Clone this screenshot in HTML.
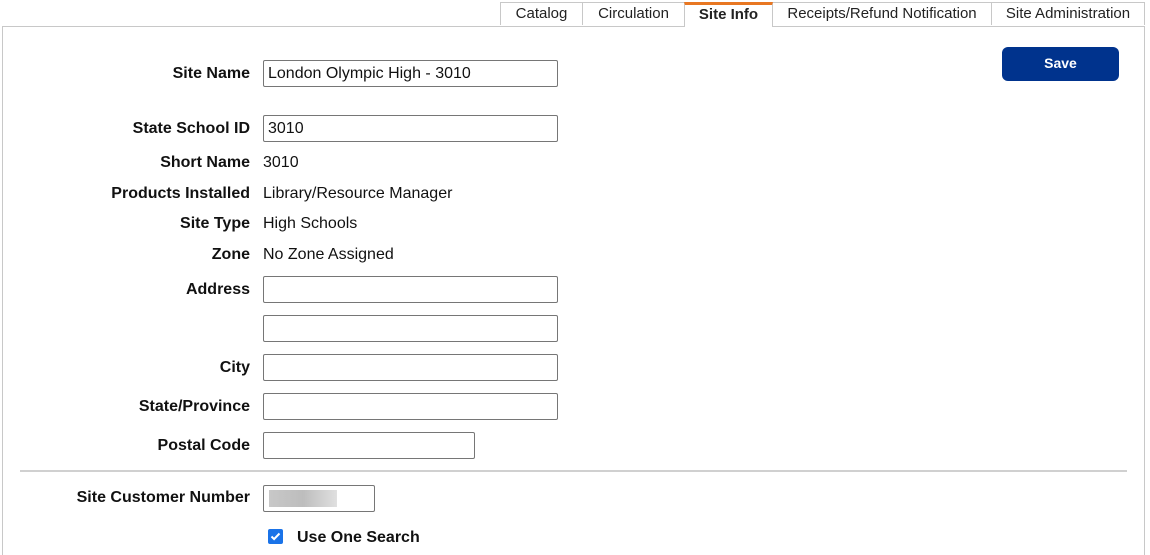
<!DOCTYPE html>
<html><head><style>
html,body{margin:0;width:1150px;height:555px;overflow:hidden}
body{background:#fff;font-family:"Liberation Sans",Arial,sans-serif;font-size:16px;color:#111;position:relative}
.a{position:absolute}
.tab{position:absolute;top:2px;height:23px;border:1px solid #c8c8c8;border-bottom:none;background:#fff;font-size:15px;line-height:22px;text-align:center;color:#222;box-sizing:border-box}
.panel{position:absolute;left:2px;top:26px;width:1143px;height:540px;border:1px solid #c8c8c8;border-bottom:none;box-sizing:border-box}
.lbl{position:absolute;right:900px;font-weight:bold;white-space:nowrap;transform:translateY(-50%);margin-top:1px}
.val{position:absolute;left:263px;white-space:nowrap;transform:translateY(-50%);margin-top:1px}
.in{position:absolute;left:263px;width:295px;height:27px;border:1px solid #767676;border-radius:2px;box-sizing:border-box;padding:0 4px;line-height:25px;font-size:16px}
</style></head><body>
<div class="panel"></div>
<div class="tab" style="left:500px;width:83px">Catalog</div>
<div class="tab" style="left:582px;width:103px">Circulation</div>
<div class="tab" style="left:684px;width:89px;font-weight:bold;border-top:3px solid #e87722;line-height:20px;height:25px;z-index:2">Site Info</div>
<div class="tab" style="left:772px;width:220px">Receipts/Refund Notification</div>
<div class="tab" style="left:991px;width:154px">Site Administration</div>
<div class="a" style="left:1002px;top:47px;width:117px;height:34px;background:#00338d;border-radius:6px;color:#fff;font-weight:bold;font-size:14px;line-height:33px;text-align:center">Save</div>

<div class="lbl" style="top:73px">Site Name</div><div class="in" style="top:60px">London Olympic High - 3010</div>
<div class="lbl" style="top:128px">State School ID</div><div class="in" style="top:115px">3010</div>
<div class="lbl" style="top:162px">Short Name</div><div class="val" style="top:162px">3010</div>
<div class="lbl" style="top:193px">Products Installed</div><div class="val" style="top:193px">Library/Resource Manager</div>
<div class="lbl" style="top:223px">Site Type</div><div class="val" style="top:223px">High Schools</div>
<div class="lbl" style="top:254px">Zone</div><div class="val" style="top:254px">No Zone Assigned</div>
<div class="lbl" style="top:289px">Address</div><div class="in" style="top:276px"></div>
<div class="in" style="top:315px"></div>
<div class="lbl" style="top:367px">City</div><div class="in" style="top:354px"></div>
<div class="lbl" style="top:406px">State/Province</div><div class="in" style="top:393px"></div>
<div class="lbl" style="top:445px">Postal Code</div><div class="in" style="top:432px;width:212px"></div>
<div class="a" style="left:20px;top:470px;width:1107px;height:2px;background:#d0d0d0"></div>
<div class="lbl" style="top:497px">Site Customer Number</div><div class="in" style="top:485px;width:112px"><div style="position:absolute;left:5px;top:4px;width:68px;height:17px;background:linear-gradient(90deg,#c8c8c8,#bdbdbd 50%,#e0e0e0)"></div></div>
<div class="a" style="left:268px;top:529px;width:15px;height:15px;background:#1a73e8;border-radius:2px"><svg width="15" height="15" viewBox="0 0 15 15"><path d="M3.5 7.5l2.6 2.6 5.4-5.6" stroke="#fff" stroke-width="2" fill="none"/></svg></div>
<div class="a" style="left:297px;top:529px;font-weight:bold">Use One Search</div>
</body></html>
